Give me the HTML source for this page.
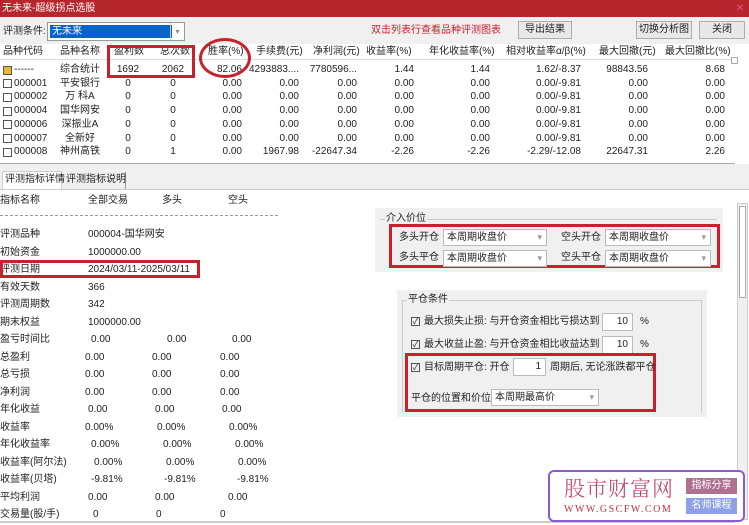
<!DOCTYPE html>
<html><head><meta charset="utf-8"><style>
*{margin:0;padding:0;box-sizing:border-box}
body{width:749px;height:525px;overflow:hidden;background:#fff;font-family:"Liberation Sans","Noto Sans CJK SC",sans-serif;font-size:10px;line-height:12px;color:#222;position:relative}
.a{position:absolute;white-space:nowrap;line-height:12px}
.r{text-align:right}
.c{text-align:center}
.btn{position:absolute;border:1px solid #adadad;background:#e8e8e8;text-align:center;line-height:16px;font-size:10px}
.rb{position:absolute;border:3px solid #c8202c}
.cb{position:absolute;background:#fff;border:1px solid #bbb;height:17px;line-height:15px;padding-left:3px;font-size:10px}
.cb:after{content:"▾";position:absolute;right:4px;top:0;color:#999;font-size:9px}
.chk{display:inline-block;width:9px;height:9px;border:1px solid #555;font-size:8px;line-height:7px;text-align:center;vertical-align:middle;margin-right:4px}
</style></head><body>
<div class="a" style="left:0;top:0;width:749px;height:17px;background:#b5272d;color:#fff;font-size:10px;line-height:17px;padding-left:2px">无未来-超级拐点选股<span style="position:absolute;right:5px;color:#e58">✕</span></div>
<div class="a" style="left:0;top:17px;width:749px;height:27px;background:#f0f0f0"></div>
<div class="a" style="left:3px;top:26px;font-size:10px">评测条件:</div>
<div class="a" style="left:47px;top:22px;width:138px;height:19px;border:1px solid #999;background:#fff"><div style="position:absolute;left:2px;top:2px;width:122px;height:13px;background:#0a64c8;color:#fff;line-height:13px;padding-left:2px">无未来</div><div style="position:absolute;right:0;top:0;width:14px;height:17px;border-left:1px solid #ccc;color:#888;text-align:center;line-height:17px;font-size:8px">▾</div></div>
<div class="a" style="left:371px;top:25px;color:#c8202c">双击列表行查看品种评测图表</div>
<div class="btn" style="left:518px;top:21px;width:54px;height:18px">导出结果</div>
<div class="btn" style="left:636px;top:21px;width:56px;height:18px">切换分析图</div>
<div class="btn" style="left:699px;top:21px;width:46px;height:18px">关闭</div>
<div class="a" style="left:0;top:44px;width:735px;height:120px;background:#fff"></div>
<div class="a" style="left:0;top:44px;width:735px;height:16px;border-bottom:1px solid #ddd;line-height:15px">
<span class="a" style="left:3px;top:2px">品种代码</span><span class="a" style="left:60px;top:2px">品种名称</span><span class="a" style="left:114px;top:2px">盈利数</span><span class="a" style="left:160px;top:2px">总次数</span><span class="a" style="left:208px;top:2px">胜率(%)</span><span class="a" style="left:256px;top:2px">手续费(元)</span><span class="a" style="left:313px;top:2px">净利润(元)</span><span class="a" style="left:366px;top:2px">收益率(%)</span><span class="a" style="left:429px;top:2px">年化收益率(%)</span><span class="a" style="left:506px;top:2px">相对收益率α/β(%)</span><span class="a" style="left:599px;top:2px">最大回撤(元)</span><span class="a" style="left:665px;top:2px">最大回撤比(%)</span>
</div>
<div id="rows"></div>
<div class="a" style="left:0;top:163px;width:735px;border-top:1px solid #aaa"></div>
<div class="a" style="left:0;top:164px;width:749px;height:26px;background:#f0f0f0"></div>
<div class="a" style="left:2px;top:171px;width:60px;height:18px;border:1px solid #ccc;border-bottom:none;background:#fff;line-height:16px;padding-left:2px">评测指标详情</div>
<div class="a" style="left:64px;top:172px;width:62px;height:17px;border-right:1px solid #999;line-height:16px;padding-left:2px">评测指标说明</div>
<div class="a" style="left:0;top:189px;width:749px;border-top:1px solid #ccc"></div>
<div class="a" style="left:0;top:195px">指标名称</div><div class="a" style="left:88px;top:195px">全部交易</div><div class="a" style="left:162px;top:195px">多头</div><div class="a" style="left:228px;top:195px">空头</div>
<div class="a" style="left:0;top:215px;width:278px;border-top:1px dashed #999"></div>
<div id="left"></div>
<div class="a" style="left:375px;top:208px;width:348px;height:64px;background:#f0f0f0"></div>
<div class="a" style="left:380px;top:219px;width:337px;border-top:1px solid #ccc"></div>
<div class="a" style="left:385px;top:213px;background:#f0f0f0;padding:0 1px">介入价位</div>
<div class="rb" style="left:389px;top:224px;width:331px;height:44px"></div>
<div class="a" style="left:399px;top:232px">多头开仓</div><div class="cb" style="left:443px;top:229px;width:104px">本周期收盘价</div>
<div class="a" style="left:561px;top:232px">空头开仓</div><div class="cb" style="left:605px;top:229px;width:106px">本周期收盘价</div>
<div class="a" style="left:399px;top:252px">多头平仓</div><div class="cb" style="left:443px;top:250px;width:104px">本周期收盘价</div>
<div class="a" style="left:561px;top:252px">空头平仓</div><div class="cb" style="left:605px;top:250px;width:106px">本周期收盘价</div>
<div class="a" style="left:397px;top:290px;width:310px;height:127px;background:#f0f0f0"></div>
<div class="a" style="left:402px;top:300px;width:300px;height:113px;border:1px solid #ccc;border-bottom:none"></div>
<div class="a" style="left:407px;top:294px;background:#f0f0f0;padding:0 1px">平仓条件</div>
<div class="a" style="left:411px;top:316px"><span class="chk">✓</span>最大损失止损: 与开仓资金相比亏损达到</div>
<div class="a" style="left:602px;top:313px;width:31px;height:18px;background:#fff;border:1px solid #bbb;text-align:right;padding-right:4px;line-height:16px">10</div><div class="a" style="left:640px;top:316px">%</div>
<div class="a" style="left:411px;top:339px"><span class="chk">✓</span>最大收益止盈: 与开仓资金相比收益达到</div>
<div class="a" style="left:602px;top:336px;width:31px;height:18px;background:#fff;border:1px solid #bbb;text-align:right;padding-right:4px;line-height:16px">10</div><div class="a" style="left:640px;top:339px">%</div>
<div class="rb" style="left:405px;top:353px;width:251px;height:59px"></div>
<div class="a" style="left:411px;top:362px"><span class="chk">✓</span>目标周期平仓: 开仓</div>
<div class="a" style="left:513px;top:358px;width:33px;height:18px;background:#fff;border:1px solid #bbb;text-align:right;padding-right:4px;line-height:16px">1</div>
<div class="a" style="left:550px;top:362px">周期后, 无论涨跌都平仓</div>
<div class="a" style="left:411px;top:393px">平仓的位置和价位</div><div class="cb" style="left:491px;top:389px;width:108px">本周期最高价</div>
<div class="a" style="left:737px;top:203px;width:11px;height:317px;background:#f0f0f0;border:1px solid #ccc"><div style="margin:2px 1px;height:92px;background:#fff;border:1px solid #aaa"></div></div>
<div class="a" style="left:731px;top:57px;width:7px;height:7px;border:1px solid #aaa;background:#fff"></div>
<div class="a" style="left:0;top:521px;width:735px;border-top:2px solid #ccc"></div>
<div class="a" style="left:548px;top:470px;width:197px;height:52px;border:2px solid #8a5cd0;border-radius:6px;background:#fff"></div>
<div class="a" style="left:564px;top:476px;font-size:21px;line-height:24px;color:#c04060;font-family:'Noto Serif CJK SC',serif;font-weight:300;letter-spacing:1px">股市财富网</div>
<div class="a" style="left:564px;top:504px;font-size:10px;color:#c03040;font-family:'Liberation Serif',serif;letter-spacing:1.5px">WWW.GSCFW.COM</div>
<div class="a" style="left:686px;top:478px;width:51px;height:16px;background:#b07090;color:#fff;font-size:10px;line-height:16px;text-align:center">指标分享</div>
<div class="a" style="left:686px;top:498px;width:51px;height:16px;background:#8ea0e8;color:#fff;font-size:10px;line-height:16px;text-align:center">名师课程</div>
<div class="rb" style="left:107px;top:45px;width:88px;height:33px"></div>
<div class="rb" style="left:0px;top:260px;width:200px;height:18px"></div>
<div class="a" style="left:199px;top:38px;width:52px;height:40px;border:3px solid #c8202c;border-radius:50%"></div>
<script>
var R=[["------","综合统计","1692","2062","82.06","4293883....","7780596...","1.44","1.44","1.62/-8.37","98843.56","8.68"],
["000001","平安银行","0","0","0.00","0.00","0.00","0.00","0.00","0.00/-9.81","0.00","0.00"],
["000002","万 科A","0","0","0.00","0.00","0.00","0.00","0.00","0.00/-9.81","0.00","0.00"],
["000004","国华网安","0","0","0.00","0.00","0.00","0.00","0.00","0.00/-9.81","0.00","0.00"],
["000006","深振业A","0","0","0.00","0.00","0.00","0.00","0.00","0.00/-9.81","0.00","0.00"],
["000007","全新好","0","0","0.00","0.00","0.00","0.00","0.00","0.00/-9.81","0.00","0.00"],
["000008","神州高铁","0","1","0.00","1967.98","-22647.34","-2.26","-2.26","-2.29/-12.08","22647.31","2.26"]];
var h="";
R.forEach(function(r,i){var y=64+i*13.7;
h+='<div class="a" style="left:3px;top:'+(y+1.5)+'px;width:9px;height:9px;border:1px solid #555;'+(i==0?'background:#e8b830;':'')+'"></div>';
h+='<div class="a" style="left:14px;top:'+y+'px">'+r[0]+'</div>';
h+='<div class="a c" style="left:55px;top:'+y+'px;width:50px">'+r[1]+'</div>';
h+='<div class="a c" style="left:108px;top:'+y+'px;width:40px">'+r[2]+'</div>';
h+='<div class="a c" style="left:153px;top:'+y+'px;width:40px">'+r[3]+'</div>';
var rs=[[4,242],[5,299],[6,357],[7,414],[8,490],[9,581],[10,648],[11,725]];
rs.forEach(function(c){h+='<div class="a r" style="left:'+(c[1]-100)+'px;top:'+y+'px;width:100px">'+r[c[0]]+'</div>';});
});
document.getElementById("rows").innerHTML=h;
var L=[["评测品种","000004-国华网安"],["初始资金","1000000.00"],["评测日期","2024/03/11-2025/03/11"],["有效天数","366"],["评测周期数"," 342"],["期末权益","1000000.00"],
["盈亏时间比","0.00","0.00","0.00",91,167,232],["总盈利","0.00","0.00","0.00",85,152,220],["总亏损","0.00","0.00","0.00",85,152,220],["净利润","0.00","0.00","0.00",85,152,220],
["年化收益","0.00","0.00","0.00",88,155,222],["收益率","0.00%","0.00%","0.00%",85,157,229],["年化收益率","0.00%","0.00%","0.00%",91,163,235],["收益率(阿尔法)","0.00%","0.00%","0.00%",94,166,238],
["收益率(贝塔)","-9.81%","-9.81%","-9.81%",91,164,237],["平均利润","0.00","0.00","0.00",88,155,228],["交易量(股/手)","0","0","0",93,156,220]];
h="";
L.forEach(function(r,i){var y=229+i*17.5;
h+='<div class="a" style="left:0;top:'+y+'px">'+r[0]+'</div>';
if(r.length==2)h+='<div class="a" style="left:88px;top:'+y+'px">'+r[1]+'</div>';
else{h+='<div class="a" style="left:'+r[4]+'px;top:'+y+'px">'+r[1]+'</div><div class="a" style="left:'+r[5]+'px;top:'+y+'px">'+r[2]+'</div><div class="a" style="left:'+r[6]+'px;top:'+y+'px">'+r[3]+'</div>';}
});
document.getElementById("left").innerHTML=h;
</script>
</body></html>
